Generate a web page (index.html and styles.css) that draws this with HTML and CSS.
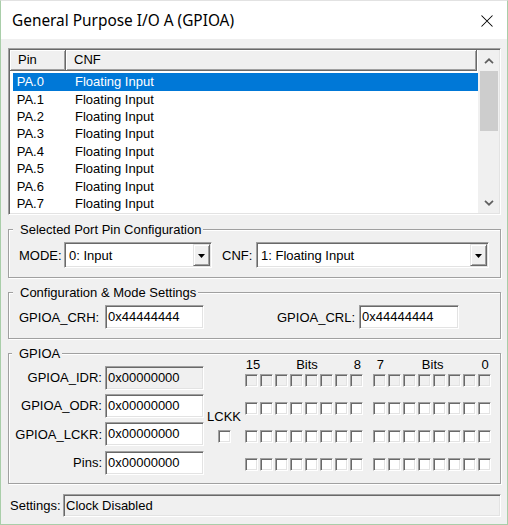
FILE: index.html
```html
<!DOCTYPE html>
<html>
<head>
<meta charset="utf-8">
<link rel="stylesheet" href="styles.css">
</head>
<body>
<div class="window">
  <div class="titlebar">
    <span class="title">General Purpose I/O A (GPIOA)</span>
    <svg class="close" width="12" height="12" viewBox="0 0 12 12"><path d="M0.5 0.5 L11.5 11.5 M11.5 0.5 L0.5 11.5" stroke="#000" stroke-width="1.05" fill="none"/></svg>
  </div>
  <div class="content">
    <div class="list">
      <div class="list-main">
        <div class="list-head">
          <div class="hcell h-pin">Pin</div>
          <div class="hcell h-cnf">CNF</div>
        </div>
        <div class="rows">
          <div class="row sel"><span class="c1">PA.0</span><span class="c2">Floating Input</span></div>
          <div class="row"><span class="c1">PA.1</span><span class="c2">Floating Input</span></div>
          <div class="row"><span class="c1">PA.2</span><span class="c2">Floating Input</span></div>
          <div class="row"><span class="c1">PA.3</span><span class="c2">Floating Input</span></div>
          <div class="row"><span class="c1">PA.4</span><span class="c2">Floating Input</span></div>
          <div class="row"><span class="c1">PA.5</span><span class="c2">Floating Input</span></div>
          <div class="row"><span class="c1">PA.6</span><span class="c2">Floating Input</span></div>
          <div class="row"><span class="c1">PA.7</span><span class="c2">Floating Input</span></div>
        </div>
      </div>
      <div class="vscroll">
        <div class="sbtn"><svg width="10" height="6" viewBox="0 0 10 6"><path d="M1 5.2 L5 1.3 L9 5.2" fill="none" stroke="#606060" stroke-width="1.7"/></svg></div>
        <div class="thumb"></div>
        <div class="track"></div>
        <div class="sbtn"><svg width="10" height="6" viewBox="0 0 10 6"><path d="M1 0.8 L5 4.7 L9 0.8" fill="none" stroke="#606060" stroke-width="1.7"/></svg></div>
      </div>
    </div>

    <fieldset class="group g1">
      <legend>Selected Port Pin Configuration</legend>
      <div class="frow">
        <span class="lbl l-mode">MODE:</span>
        <div class="combo c-mode"><span class="val">0: Input</span><span class="btn"><svg width="7" height="4" viewBox="0 0 7 4"><path d="M0 0 H7 L3.5 4 Z" fill="#000"/></svg></span></div>
        <span class="lbl l-cnf">CNF:</span>
        <div class="combo c-cnf"><span class="val">1: Floating Input</span><span class="btn"><svg width="7" height="4" viewBox="0 0 7 4"><path d="M0 0 H7 L3.5 4 Z" fill="#000"/></svg></span></div>
      </div>
    </fieldset>

    <fieldset class="group g2">
      <legend>Configuration &amp; Mode Settings</legend>
      <div class="frow">
        <span class="lbl l-crh">GPIOA_CRH:</span>
        <div class="edit e-crh">0x44444444</div>
        <span class="lbl l-crl">GPIOA_CRL:</span>
        <div class="edit e-crl">0x44444444</div>
      </div>
    </fieldset>

    <fieldset class="group g3">
      <legend>GPIOA</legend>
      <div class="g3-inner">
        <div class="regs">
          <span class="rlbl">GPIOA_IDR:</span><div class="edit ro">0x00000000</div>
          <span class="rlbl">GPIOA_ODR:</span><div class="edit">0x00000000</div>
          <span class="rlbl">GPIOA_LCKR:</span><div class="edit">0x00000000</div>
          <span class="rlbl">Pins:</span><div class="edit">0x00000000</div>
        </div>
        <div class="lckk">
          <span class="lckk-l">LCKK</span>
          <span class="cb"></span>
        </div>
        <div class="bits">
          <div class="bits-head">
            <div class="bh bh1"><span>15</span><span>Bits</span><span>8</span></div>
            <div class="bh bh2"><span>7</span><span>Bits</span><span>0</span></div>
          </div>
          <div class="brow dis">
            <div class="half"><span class="cb"></span><span class="cb"></span><span class="cb"></span><span class="cb"></span><span class="cb"></span><span class="cb"></span><span class="cb"></span><span class="cb"></span></div>
            <div class="half"><span class="cb"></span><span class="cb"></span><span class="cb"></span><span class="cb"></span><span class="cb"></span><span class="cb"></span><span class="cb"></span><span class="cb"></span></div>
          </div>
          <div class="brow">
            <div class="half"><span class="cb"></span><span class="cb"></span><span class="cb"></span><span class="cb"></span><span class="cb"></span><span class="cb"></span><span class="cb"></span><span class="cb"></span></div>
            <div class="half"><span class="cb"></span><span class="cb"></span><span class="cb"></span><span class="cb"></span><span class="cb"></span><span class="cb"></span><span class="cb"></span><span class="cb"></span></div>
          </div>
          <div class="brow">
            <div class="half"><span class="cb"></span><span class="cb"></span><span class="cb"></span><span class="cb"></span><span class="cb"></span><span class="cb"></span><span class="cb"></span><span class="cb"></span></div>
            <div class="half"><span class="cb"></span><span class="cb"></span><span class="cb"></span><span class="cb"></span><span class="cb"></span><span class="cb"></span><span class="cb"></span><span class="cb"></span></div>
          </div>
          <div class="brow">
            <div class="half"><span class="cb"></span><span class="cb"></span><span class="cb"></span><span class="cb"></span><span class="cb"></span><span class="cb"></span><span class="cb"></span><span class="cb"></span></div>
            <div class="half"><span class="cb"></span><span class="cb"></span><span class="cb"></span><span class="cb"></span><span class="cb"></span><span class="cb"></span><span class="cb"></span><span class="cb"></span></div>
          </div>
        </div>
      </div>
    </fieldset>

    <div class="status">
      <span class="lbl">Settings:</span>
      <div class="edit ro s-field">Clock Disabled</div>
    </div>
  </div>
</div>
</body>
</html>
```

FILE: styles.css
```css
html, body {
  margin: 0;
  padding: 0;
  background: #f0f0f0;
}

.window {
  width: 508px;
  height: 525px;
  box-sizing: border-box;
  border: 1px solid #a9cea9;
  border-top-color: #e2e2e2;
  background: #f0f0f0;
  font-family: "Liberation Sans", Arial, sans-serif;
  font-size: 13px;
  color: #000;
  overflow: hidden;
}

.titlebar {
  height: 38px;
  background: #fff;
  display: flex;
  align-items: center;
  justify-content: space-between;
  padding: 0 14px 0 11px;
}

.title {
  font-family: "Noto Sans", sans-serif;
  font-size: 15.4px;
  line-height: 20px;
  padding-top: 1px;
}

.close {
  display: block;
  margin-top: 1px;
}

.content {
  padding: 9px 6px 0 7px;
}

/* ---------- list view ---------- */
.list {
  height: 167px;
  box-sizing: border-box;
  border: 1px solid;
  border-color: #a0a0a0 #fff #fff #a0a0a0;
  box-shadow: inset 1px 1px 0 #696969, inset -1px -1px 0 #e3e3e3;
  padding: 1px;
  display: flex;
  background: #fff;
}

.list-main {
  flex: 1;
  display: flex;
  flex-direction: column;
}

.list-head {
  display: flex;
  height: 21px;
  background: #fff;
}

.hcell {
  box-sizing: border-box;
  height: 21px;
  line-height: 19px;
  background: #f0f0f0;
  border-right: 1px solid #696969;
  border-bottom: 1px solid #696969;
  box-shadow: inset 1px 1px 0 #fff, inset -1px -1px 0 #a0a0a0;
  padding-left: 8px;
}

.h-pin { width: 56px; }
.h-cnf { width: 411px; }

.rows {
  padding: 2.3px 0 0 3.3px;
}

.row {
  display: flex;
  height: 17.4px;
  line-height: 17.4px;
  padding-left: 3.4px;
}

.row.sel {
  background: #0078d7;
  color: #fff;
}

.c1 { width: 58.3px; }

.vscroll {
  width: 21px;
  background: #f0f0f0;
  display: flex;
  flex-direction: column;
}

.sbtn {
  height: 21px;
  display: flex;
  align-items: center;
  justify-content: center;
}

.sbtn svg { display: block; }

.thumb {
  height: 60px;
  margin: 0 1px 0 2px;
  background: #cdcdcd;
}

.track { flex: 1; }

/* ---------- group boxes ---------- */
.group {
  margin: 0;
  min-width: 0;
  border: 1px solid #a0a0a0;
  box-shadow: inset 1px 1px 0 #fff, 1px 1px 0 #fff;
}

.group legend {
  line-height: 15px;
  padding: 0 2px 0 7px;
  margin-left: -6px;
  background: #f0f0f0;
}

.g1 {
  margin-top: 6.5px;
  padding: 5.5px 0 9px 10px;
}

.g2 {
  margin-top: 6.5px;
  padding: 5.5px 0 9px 10px;
}

.g3 {
  margin-top: 7px;
  padding: 0 0 8px 3px;
}

.g3 legend {
  margin-left: 0;
}

.frow {
  display: flex;
  align-items: center;
}

.lbl {
  white-space: nowrap;
  line-height: 15px;
}

/* sunken controls */
.combo, .edit {
  box-sizing: border-box;
  border: 1px solid;
  border-color: #a0a0a0 #fff #fff #a0a0a0;
  box-shadow: inset 1px 1px 0 #696969, inset -1px -1px 0 #e3e3e3;
  background: #fff;
}

.combo {
  display: flex;
  height: 26px;
  padding: 1px;
}

.combo .val {
  flex: 1;
  line-height: 23px;
  padding-left: 3px;
  white-space: nowrap;
}

.combo .btn {
  width: 17px;
  height: 22px;
  box-sizing: border-box;
  background: #f0f0f0;
  border: 1px solid;
  border-color: #e3e3e3 #696969 #696969 #e3e3e3;
  box-shadow: inset 1px 1px 0 #fff, inset -1px -1px 0 #a0a0a0;
  display: flex;
  align-items: center;
  justify-content: center;
}

.combo .btn svg { display: block; margin-top: 1px; }

.l-mode { width: 45px; }
.c-mode { width: 148px; }
.l-cnf { margin-left: 10px; width: 34px; }
.c-cnf { width: 233px; }

.edit {
  height: 24px;
  line-height: 22px;
  padding-left: 2px;
  white-space: nowrap;
}

.edit.ro { background: #f0f0f0; }

.l-crh { width: 86px; }
.e-crh { width: 99px; }
.l-crl { margin-left: 73px; width: 82px; }
.e-crl { width: 100px; }

/* ---------- GPIOA group ---------- */
.g3-inner {
  display: flex;
  align-items: flex-start;
}

.regs {
  display: grid;
  grid-template-columns: 90px 99px;
  column-gap: 3px;
  row-gap: 4.4px;
  align-items: center;
  margin-top: 4.5px;
}

.rlbl {
  text-align: right;
  white-space: nowrap;
  line-height: 15px;
}

.lckk {
  width: 38px;
  margin-left: 1px;
  margin-top: 48px;
  display: flex;
  flex-direction: column;
  align-items: center;
}

.lckk-l {
  line-height: 15px;
  margin-bottom: 5.5px;
}

.bits {
  margin-left: 2px;
  margin-top: -4.5px;
}

.bits-head {
  display: flex;
  gap: 10px;
  line-height: 15px;
  margin-bottom: 2px;
}

.bh {
  width: 118px;
  box-sizing: border-box;
  display: flex;
  justify-content: space-between;
}

.bh1 { padding: 0 2px 0 0.7px; }
.bh2 { padding: 0 2.3px 0 3.7px; }

.brow {
  display: flex;
  gap: 10px;
  margin-bottom: 15px;
}

.brow:last-child { margin-bottom: 0; }

.half {
  display: flex;
  gap: 2px;
}

.cb {
  display: block;
  width: 13px;
  height: 13px;
  box-sizing: border-box;
  border: 1px solid;
  border-color: #a0a0a0 #fff #fff #a0a0a0;
  box-shadow: inset 1px 1px 0 #696969, inset -1px -1px 0 #e3e3e3;
  background: #fff;
}

.brow.dis .cb { background: #f0f0f0; }

/* ---------- status ---------- */
.status {
  display: flex;
  align-items: center;
  margin-top: 10px;
  padding-left: 2px;
}

.status .lbl { width: 53px; }

.s-field {
  flex: 1;
  height: 23px;
  line-height: 21px;
  margin-right: 0;
}
```
